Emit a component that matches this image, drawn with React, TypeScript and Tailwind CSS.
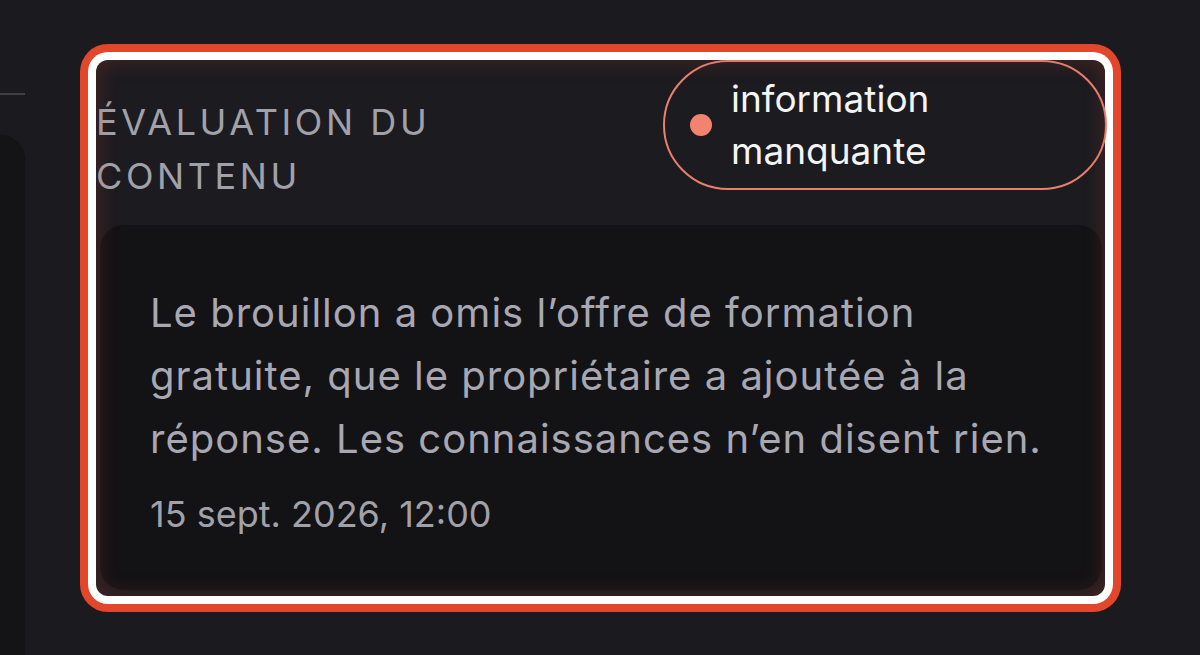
export default function App() {
  return (
    <div
      className="flex h-[655px] w-[1200px] overflow-hidden bg-[#1b1a1f]"
      style={{ fontFamily: "Inter, 'Noto Sans', sans-serif" }}
    >
      <aside className="flex w-[25px] shrink-0 flex-col pt-[93px]">
        <div className="h-[2px] bg-[#3f3f46]" />
        <div className="mt-[40px] flex-1 rounded-tr-[24px] bg-[#141316]" />
      </aside>

      <main className="flex-1 pl-[71px] pt-[60px]">
        <section className="relative h-[536px] w-[1009px] rounded-[12px] bg-[#1c1b20] shadow-[0_0_0_8px_#ffffff,0_0_0_16px_#e3472b]">
          <div className="flex items-start justify-between">
            <h2 className="mt-[35px] w-[500px] text-[36px] leading-[54px] font-normal uppercase tracking-[0.1em] text-[#a1a1aa]">
              Évaluation du contenu
            </h2>
            <div className="mr-[-2px] flex h-[130px] w-[444px] items-center gap-[19px] rounded-full border-2 border-[#e8806f] pl-[25px]">
              <span className="h-[22px] w-[22px] shrink-0 rounded-full bg-[#f2836f]" />
              <span className="w-[240px] text-[37px] leading-[52px] text-[#f4f4f5]">
                information manquante
              </span>
            </div>
          </div>

          <div className="ml-[4px] mr-[3px] mt-[22px] h-[365px] rounded-[24px] bg-[#131215] px-[50px] pt-[56px]">
            <p className="whitespace-nowrap text-[40px] leading-[63px] tracking-[0.025em] text-[#a8a8b3]">
              Le brouillon a omis l’offre de formation
              <br />
              gratuite, que le propriétaire a ajoutée à la
              <br />
              réponse. Les connaissances n’en disent rien.
            </p>
            <p className="mt-[20px] text-[36px] leading-[48px] text-[#a1a1aa]">15 sept. 2026, 12:00</p>
          </div>

          <div className="pointer-events-none absolute inset-0 rounded-[12px] shadow-[inset_0_0_22px_rgba(200,70,45,0.28)]" />
        </section>
      </main>
    </div>
  );
}
